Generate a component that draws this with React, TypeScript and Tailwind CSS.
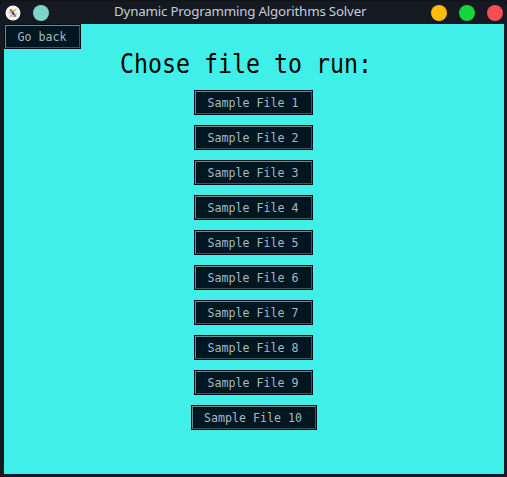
const files = Array.from({ length: 10 }, (_, i) => `Sample File ${i + 1}`);

function RetroButton({ label }: { label: string }) {
  return (
    <button className="h-[25px] border border-[#020c13] bg-[#001620] font-['DejaVu_Sans_Mono',monospace] text-[11.63px] leading-none text-[#a3bcc3]">
      <span className="flex h-full items-center border border-t-[#75878d] border-r-[#40545b] border-b-[#40545b] border-l-[#75878d] pr-[12.6px] pl-[11.4px]">
        <span className="block origin-center scale-y-[1.05] whitespace-pre pt-[3px]">{label}</span>
      </span>
    </button>
  );
}

function TitleBar() {
  return (
    <header className="flex h-6 items-center border-t-2 border-[#10171b]">
      <div className="flex w-[110px] items-center gap-3 pl-[5px]">
        <svg width="16" height="16" viewBox="0 0 16 16">
          <circle cx="8" cy="8" r="7.5" fill="#f3f3f2" />
          <path d="M10.8 4.5 5 11.5" stroke="#8995a3" strokeWidth="1" />
          <path d="M5.3 4.5 10.5 11.5" stroke="#343a42" strokeWidth="2" />
          <path d="M4.3 8.5c0-2 3-3.5 6.5-3M5 10.8c3 .8 6.3-.7 6.4-2.8" stroke="#e8ad58" strokeWidth="1.3" fill="none" />
        </svg>
        <span className="size-4 rounded-full bg-[#7fd3c9]" />
      </div>
      <h1 className="w-[260px] whitespace-nowrap pb-[3px] pl-1 font-['Noto_Sans',sans-serif] text-[13.33px] leading-[17px] tracking-[-0.2px] text-[#c3ced8]">
        Dynamic Programming Algorithms Solver
      </h1>
      <div className="ml-auto flex gap-3 pr-1">
        <span className="size-4 rounded-full bg-[#ffbd09]" />
        <span className="size-4 rounded-full bg-[#16d43d]" />
        <span className="size-4 rounded-full bg-[#f64e55]" />
      </div>
    </header>
  );
}

export default function App() {
  return (
    <div className="h-[477px] w-[507px] overflow-hidden bg-[#05090b]">
      <div className="flex h-full flex-col rounded-t-md bg-[#151a22]">
        <TitleBar />
        <main className="mr-[3px] mb-[3px] ml-1 flex min-h-0 flex-1 flex-col bg-[#40f0e8]">
          <div className="flex">
            <RetroButton label="Go back" />
          </div>
          <h2 className="ml-[116px] flex h-[41px] items-start whitespace-pre font-['DejaVu_Sans_Mono',monospace] text-[23.25px] leading-[30px] text-black">
            <span className="block origin-center scale-y-[1.16]">Chose file to run:</span>
          </h2>
          <div className="flex flex-col items-center gap-2.5 pr-[0.6px]">
            {files.map((file) => (
              <RetroButton key={file} label={file} />
            ))}
          </div>
        </main>
      </div>
    </div>
  );
}
